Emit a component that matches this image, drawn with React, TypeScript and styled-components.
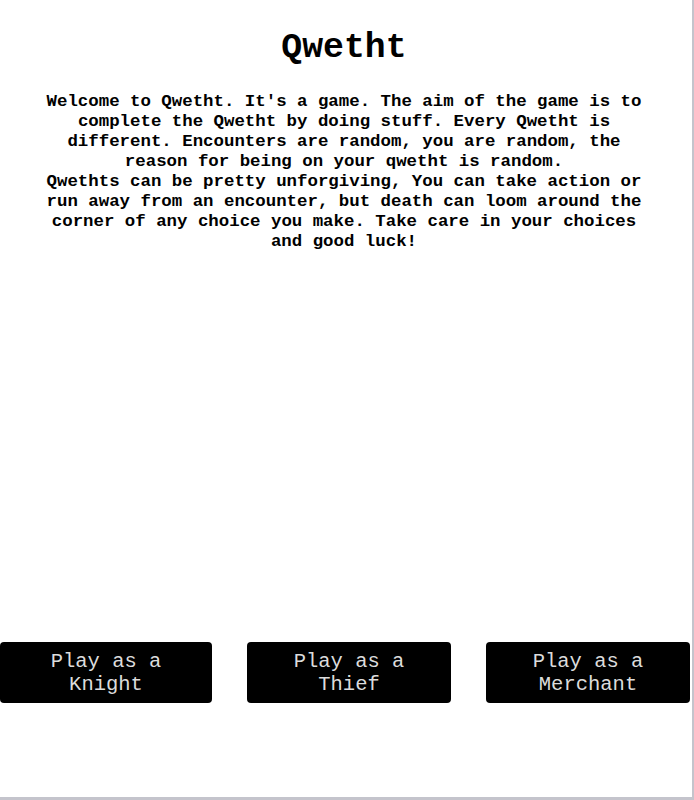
import React from "react";
import styled, { createGlobalStyle } from "styled-components";

const Global = createGlobalStyle`
  html, body { margin: 0; padding: 0; background: #ffffff; }
  * { box-sizing: border-box; }
`;

const MONO = `"Courier New", "Nimbus Mono PS", "Nimbus Mono L", "FreeMono", Courier, "Liberation Mono", monospace`;

const Page = styled.div`
  width: 694px;
  height: 800px;
  display: flex;
  flex-direction: column;
  align-items: center;
  padding-top: 28px;
  padding-right: 4px;
  padding-bottom: 94px;
  border-right: 2px solid #c4c4cc;
  border-bottom: 3px solid #c4c4cc;
  font-family: ${MONO};
  color: #000;
  background: #fff;
`;

const Title = styled.h1`
  margin: 0;
  font-size: 34.8px;
  font-weight: bold;
  line-height: normal;
  text-align: center;
`;

const Intro = styled.p`
  margin: 25px 0 0;
  width: 610px;
  font-size: 17.4px;
  font-weight: bold;
  line-height: 20px;
  text-align: center;
`;

const ButtonRow = styled.div`
  margin-top: auto;
  align-self: stretch;
  display: flex;
  gap: 35px;
`;

const PlayButton = styled.button<{ $wide?: boolean }>`
  flex-shrink: 0;
  width: ${(p) => (p.$wide ? "212px" : "204px")};
  height: 61px;
  padding: 0 10px;
  border: none;
  border-radius: 4px;
  background: #000;
  color: #dcdcdc;
  font-family: ${MONO};
  font-size: 20.5px;
  line-height: 23px;
  text-align: center;
  cursor: pointer;
`;

export default function App() {
  return (
    <>
      <Global />
      <Page>
        <Title>Qwetht</Title>
        <Intro>
          Welcome to Qwetht. It's a game. The aim of the game is to complete the
          Qwetht by doing stuff. Every Qwetht is different. Encounters are random,
          you are random, the reason for being on your qwetht is random.
          <br />
          Qwethts can be pretty unforgiving, You can take action or run away from
          an encounter, but death can loom around the corner of any choice you
          make. Take care in your choices and good luck!
        </Intro>
        <ButtonRow>
          <PlayButton $wide>Play as a Knight</PlayButton>
          <PlayButton>Play as a Thief</PlayButton>
          <PlayButton>Play as a Merchant</PlayButton>
        </ButtonRow>
      </Page>
    </>
  );
}
